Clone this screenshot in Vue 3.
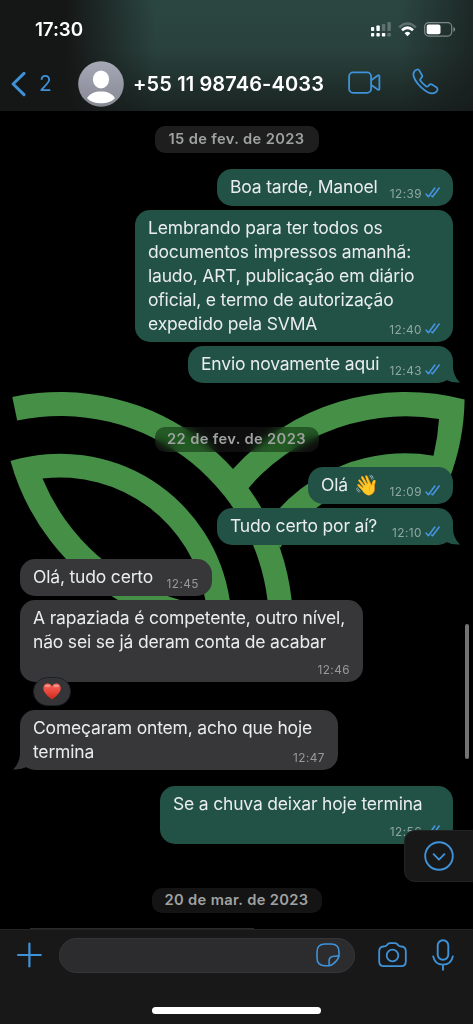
<script setup>
const groups = [
  {
    key: 'feb15',
    date: '15 de fev. de 2023',
    messages: [
      { id: 'm1', out: true, lines: ['Boa tarde, Manoel'], time: '12:39' },
      {
        id: 'm2',
        out: true,
        lines: [
          'Lembrando para ter todos os',
          'documentos impressos amanhã:',
          'laudo, ART, publicação em diário',
          'oficial, e termo de autorização',
          'expedido pela SVMA'
        ],
        time: '12:40'
      },
      { id: 'm3', out: true, tail: true, lines: ['Envio novamente aqui'], time: '12:43' }
    ]
  },
  {
    key: 'feb22',
    date: '22 de fev. de 2023',
    messages: [
      { id: 'm4', out: true, lines: ['Olá'], emoji: '👋', time: '12:09' },
      { id: 'm5', out: true, tail: true, lines: ['Tudo certo por aí?'], time: '12:10' },
      { id: 'm6', lines: ['Olá, tudo certo'], time: '12:45' },
      {
        id: 'm7',
        lines: ['A rapaziada é competente, outro nível,', 'não sei se já deram conta de acabar'],
        time: '12:46',
        reaction: true
      },
      { id: 'm8', tail: true, lines: ['Começaram ontem, acho que hoje', 'termina'], time: '12:47' },
      { id: 'm9', out: true, lines: ['Se a chuva deixar hoje termina'], time: '12:56' }
    ]
  },
  { key: 'mar20', date: '20 de mar. de 2023', messages: [] }
]
</script>

<template>
  <div class="phone">
    <header class="header">
      <div class="status">
        <span class="clock">17:30</span>
        <div class="status-icons">
          <svg class="signal" width="20" height="15" viewBox="0 0 20 15" fill="#fff">
            <rect x="0" y="5" width="3.2" height="4" rx=".8" />
            <rect x="5.4" y="3.4" width="3.4" height="5.6" rx=".8" />
            <rect x="10.9" y="2" width="3.4" height="7" rx=".8" opacity=".25" />
            <rect x="16.4" y="0" width="3.4" height="9" rx=".8" opacity=".25" />
            <rect x="0" y="11" width="3.2" height="3.6" rx=".8" />
            <rect x="5.4" y="11" width="3.4" height="3.6" rx=".8" />
            <rect x="10.9" y="11" width="3.4" height="3.6" rx=".8" />
            <rect x="16.4" y="11" width="3.4" height="3.6" rx=".8" opacity=".25" />
          </svg>
          <svg class="wifi" width="19" height="15" viewBox="0 0 19 15">
            <path d="M1.2 5.4Q9.5-2.4 17.8 5.4" fill="none" stroke="#fff" stroke-width="2.6" opacity=".25" />
            <path d="M4 8.3Q9.5 3.2 15 8.3" fill="none" stroke="#fff" stroke-width="2.7" />
            <path d="M6.6 11.2Q9.5 8.5 12.4 11.2L9.5 14.2Z" fill="#fff" />
          </svg>
          <svg class="battery" width="32" height="15" viewBox="0 0 32 15">
            <rect x=".7" y=".7" width="27" height="13.4" rx="4" fill="none" stroke="#fff" stroke-width="1.2" opacity=".42" />
            <rect x="2.7" y="2.6" width="13.8" height="9.6" rx="2" fill="#fff" />
            <path d="M29.4 5v4.8q1.7-.6 1.7-2.4T29.4 5Z" fill="#fff" opacity=".45" />
          </svg>
        </div>
      </div>
      <div class="contact">
        <svg class="back" width="16" height="26" viewBox="0 0 16 26">
          <path d="M14 2.4 3.1 13 14 23.6" fill="none" stroke="#3f92d8" stroke-width="3" stroke-linecap="round" stroke-linejoin="round" />
        </svg>
        <span class="unread">2</span>
        <svg class="avatar" width="46" height="46" viewBox="0 0 46 46">
          <defs>
            <linearGradient id="avatar-fill" x1="0" y1="0" x2="0" y2="1">
              <stop offset="0" stop-color="#a6a9b6" />
              <stop offset="1" stop-color="#868994" />
            </linearGradient>
          </defs>
          <circle cx="23" cy="23" r="22.8" fill="url(#avatar-fill)" />
          <ellipse cx="23" cy="18.4" rx="8.1" ry="9" fill="#fff" />
          <path d="M9 37.2C12 32.5 17 30.6 23 30.6S34 32.5 37 37.2C33 41 28 42.3 23 42.3S13 41 9 37.2Z" fill="#fff" />
        </svg>
        <span class="number">+55 11 98746-4033</span>
        <svg class="video" width="34" height="24" viewBox="0 0 34 24" fill="none" stroke="#3f92d8" stroke-width="1.8" stroke-linejoin="round">
          <rect x="1.1" y="1.4" width="22" height="20.4" rx="4" />
          <path d="M23.3 9.2 29.7 4.5Q31.4 3.7 31.4 5.3V17.8Q31.4 19.4 29.7 18.6L23.3 13.9" />
        </svg>
        <svg class="call" width="28" height="28" viewBox="0 0 28 28" fill="none" stroke="#3f92d8" stroke-width="1.8" stroke-linejoin="round">
          <path d="M5.2 1.5C3.6 1.9 1.7 3.7 1.4 5.8C1 9.3 5 15.3 9.2 19.3C13.3 23 17.2 25.6 20.5 25.4C23 25.1 25.2 23.4 25.5 21.4C25.6 20.5 25.2 19.9 24.4 19.3L19.9 16.5C19 16 18.2 16.1 17.4 16.9L16.2 18.1C15.5 18.8 14.8 18.8 14 18.2C12 16.8 9.8 14.6 8.5 12.8C7.9 12 8 11.3 8.7 10.6L9.6 9.5C10.4 8.7 10.4 7.9 9.9 7L7.4 2.6C6.8 1.6 6.2 1.2 5.2 1.5Z" />
        </svg>
      </div>
    </header>

    <main class="chat">
      <svg class="wallpaper" width="473" height="489" viewBox="0 111 473 489" fill="#458f47">
        <path d="M12.3 397A233 233 0 0 1 293 625H269A209 209 0 0 0 17.2 420.4Z" />
        <path d="M464.6 399.5A233 233 0 0 0 233 469V508A209 209 0 0 1 439 419A209 209 0 0 1 433.5 455.7A171.5 171.5 0 0 0 268 522L280 548A147.5 147.5 0 0 1 445 483L449 480A233 233 0 0 0 464.6 399.5Z" />
        <path d="M10.5 461A171.5 171.5 0 0 1 229.7 600H205.4A147.5 147.5 0 0 0 42.5 478.5A209 209 0 0 0 180 600H118A233 233 0 0 1 10.5 461Z" />
      </svg>

      <section v-for="g in groups" :key="g.key" class="group" :class="g.key">
        <div class="date"><span>{{ g.date }}</span></div>
        <div
          v-for="m in g.messages"
          :key="m.id"
          class="bubble"
          :class="[m.id, m.out ? 'out' : 'in']"
        >
          <div class="text">
            <div v-for="line in m.lines" :key="line" class="line">
              <span>{{ line }}</span>
              <span v-if="m.emoji" class="emoji">{{ m.emoji }}</span>
            </div>
          </div>
          <div class="meta">
            <span>{{ m.time }}</span>
            <svg v-if="m.out" class="ticks" width="16" height="11" viewBox="0 0 16 11" fill="none" stroke="#4796e6" stroke-width="1.5" stroke-linecap="round" stroke-linejoin="round">
              <path d="M1 7 3.4 9.8 9.8 1M6.5 9 7.6 9.8 14.2 1" />
            </svg>
          </div>
          <svg v-if="m.tail" class="tail" width="20" height="22" viewBox="0 0 20 22">
            <path d="M0 0H12.9V5Q13.2 15.5 20 21.4Q12 22 6.5 19L0 20Z" />
          </svg>
          <div v-if="m.reaction" class="reaction">
            <svg width="18" height="17" viewBox="0 0 18 17">
              <defs>
                <linearGradient id="heart-fill" x1="0" y1="0" x2="0" y2="1">
                  <stop offset="0" stop-color="#f5675a" />
                  <stop offset=".5" stop-color="#e9483d" />
                  <stop offset="1" stop-color="#c8271d" />
                </linearGradient>
              </defs>
              <path d="M9 16.6C5.5 13.7.3 9.7.3 5.2C.3 2.4 2.2.5 4.7.5C6.7.5 8.3 1.6 9 3.4C9.7 1.6 11.3.5 13.3.5C15.8.5 17.7 2.4 17.7 5.2C17.7 9.7 12.5 13.7 9 16.6Z" fill="url(#heart-fill)" />
              <ellipse cx="4.6" cy="3" rx="2.8" ry="1.3" fill="#fff" opacity=".3" />
              <ellipse cx="13.2" cy="3" rx="2.8" ry="1.3" fill="#fff" opacity=".3" />
            </svg>
          </div>
        </div>
      </section>

      <div class="scrollbar"></div>
      <div class="next-bubble"></div>
      <button class="jump" aria-label="Ir para o fim">
        <svg width="30" height="30" viewBox="0 0 30 30" fill="none" stroke="#3f92d8" stroke-width="1.9" stroke-linecap="round" stroke-linejoin="round">
          <circle cx="15" cy="15" r="13.8" />
          <path d="M9.6 13.2 15 18.6 20.4 13.2" />
        </svg>
      </button>
    </main>

    <footer class="footer">
      <div class="composer">
        <svg class="plus" width="26" height="26" viewBox="0 0 26 26" stroke="#3f92d8" stroke-width="2.2" stroke-linecap="round">
          <path d="M13.4 1.6V24.4M2 13H24.8" />
        </svg>
        <div class="field">
          <svg width="24" height="24" viewBox="0 0 24 24" fill="none" stroke="#3f92d8" stroke-width="1.6" stroke-linejoin="round">
            <path d="M12.8 22.7H9Q1 22.7 1 14.7V9Q1 1 9 1H15Q23 1 23 9V12.2C23 16 16.8 22.7 12.8 22.7Z" />
            <path d="M12.8 22.7Q13.4 21.6 13.1 18.4Q12.9 13.4 18.2 13.2Q22.2 13.3 23 12.2" />
          </svg>
        </div>
        <svg class="camera" width="29" height="26" viewBox="0 0 29 26" fill="none" stroke="#3f92d8" stroke-width="1.8" stroke-linejoin="round">
          <path d="M1.2 9.2Q1.2 4.9 5.5 4.5Q7.6 4.5 8.7 3.3Q10.2 1.2 12.1 1.2H16.9Q18.8 1.2 20.3 3.3Q21.4 4.5 23.5 4.5Q27.8 4.9 27.8 9.2V19.6Q27.8 24.2 23.2 24.2H5.8Q1.2 24.2 1.2 19.6Z" />
          <circle cx="14.5" cy="13.5" r="5.8" />
        </svg>
        <svg class="mic" width="22" height="32" viewBox="0 0 22 32" fill="none" stroke="#3f92d8" stroke-width="1.9" stroke-linecap="round">
          <rect x="5.7" y="1.2" width="10.6" height="19.6" rx="5.3" />
          <path d="M1.2 17.4Q2.7 25.6 11 25.6T20.8 17.4M11 25.6V30.8" />
        </svg>
      </div>
      <div class="home-bar"></div>
    </footer>
  </div>
</template>

<style>
html,
body {
  background: #000;
}
</style>

<style scoped>
.phone {
  width: 473px;
  height: 1024px;
  display: flex;
  flex-direction: column;
  overflow: hidden;
  background: #000;
  color: #e9edec;
  font-family: Inter, 'Liberation Sans', sans-serif;
}

.header {
  box-sizing: border-box;
  height: 111px;
  flex: none;
  background:
    linear-gradient(90deg, #151616 0, #151616 64px, rgba(21, 22, 22, 0) 155px, rgba(21, 22, 22, 0) 400px, rgba(21, 24, 24, 0.65) 473px),
    linear-gradient(180deg, #2b4641 0, #29413c 50px, #1a2422 111px);
}
.status {
  height: 57px;
  display: flex;
  align-items: center;
  justify-content: space-between;
  padding: 1px 17px 0 35px;
  box-sizing: border-box;
}
.clock {
  font-size: 18.8px;
  font-weight: 600;
  color: #fff;
  letter-spacing: -0.1px;
}
.status-icons {
  display: flex;
  align-items: center;
  margin-top: 0;
}
.wifi {
  margin-left: 7px;
}
.battery {
  margin-left: 7px;
}
.contact {
  display: flex;
  align-items: center;
  height: 53px;
}
.back {
  margin-left: 10px;
}
.unread {
  margin-left: 13px;
  width: 12px;
  color: #3f92d8;
  font-size: 21px;
}
.avatar {
  margin-left: 27px;
}
.number {
  margin-left: 9px;
  width: 193px;
  color: #fff;
  font-size: 20px;
  font-weight: 600;
  letter-spacing: 0.12px;
  white-space: nowrap;
}
.video {
  margin-left: 22px;
  margin-top: -2px;
}
.call {
  margin-left: 30px;
  margin-top: -3px;
}

.chat {
  position: relative;
  height: 818px;
  flex: none;
  overflow: hidden;
}
.wallpaper {
  position: absolute;
  left: 0;
  top: 0;
}
.group {
  position: relative;
  display: flex;
  flex-direction: column;
  width: 473px;
}
.feb15 {
  padding-top: 15px;
}
.feb22 {
  padding-top: 44px;
}
.mar20 {
  padding-top: 44px;
}
.date {
  box-sizing: border-box;
  display: flex;
  align-items: center;
  justify-content: center;
  align-self: center;
  width: 164px;
  height: 25px;
  padding-bottom: 2px;
  border-radius: 10px;
  background: rgba(28, 28, 28, 0.5);
  backdrop-filter: blur(5px) saturate(1.6);
  color: #a0a2a2;
  font-size: 14.7px;
  font-weight: 600;
  letter-spacing: 0.36px;
  white-space: nowrap;
}
.feb15 .date {
  height: 27px;
  background: #1e1e1e;
  margin-bottom: 16px;
}
.feb22 .date {
  margin-bottom: 15px;
}
.mar20 .date {
  width: 170px;
  background: #141414;
}

.bubble {
  position: relative;
  box-sizing: border-box;
  height: 37px;
  padding: 6px 13px;
  border-radius: 15px;
  margin-bottom: 4px;
}
.out {
  align-self: flex-end;
  margin-right: 20px;
  background: #225146;
  fill: #225146;
}
.in {
  align-self: flex-start;
  margin-left: 20px;
  background: #373739;
  fill: #373739;
}
.line {
  display: flex;
  align-items: center;
  height: 24px;
  font-size: 17.5px;
  line-height: 24px;
  letter-spacing: -0.18px;
  white-space: nowrap;
}
.emoji {
  margin-left: 6px;
  font-size: 20px;
  letter-spacing: 0;
}
.meta {
  position: absolute;
  right: 13px;
  bottom: 5px;
  display: flex;
  align-items: center;
  height: 15px;
  color: #8ea8a2;
  font-size: 11.8px;
  letter-spacing: 0.45px;
}
.in .meta {
  color: #98989b;
}
.ticks {
  margin-left: 3px;
  margin-right: -1px;
  margin-top: -2px;
}
.tail {
  position: absolute;
  right: -7px;
  bottom: 0;
}
.in .tail {
  right: auto;
  left: -7px;
  transform: scaleX(-1);
}

.m1 {
  width: 236px;
}
.m2 {
  width: 318px;
  height: 132px;
}
.m3 {
  width: 265px;
  margin-bottom: 0;
}
.m4 {
  width: 145px;
}
.m5 {
  width: 236px;
  margin-bottom: 14px;
}
.m6 {
  width: 192px;
}
.m7 {
  width: 343px;
  height: 82px;
  margin-bottom: 28px;
}
.m8 {
  width: 318px;
  height: 60px;
  margin-bottom: 16px;
}
.m9 {
  width: 293px;
  height: 58px;
  margin-bottom: 0;
}
.reaction {
  position: absolute;
  left: 13px;
  top: 77px;
  box-sizing: border-box;
  width: 38px;
  height: 29px;
  border: 1px solid #1b2226;
  border-radius: 15px;
  background: #353537;
  display: flex;
  align-items: center;
  justify-content: center;
}
.scrollbar {
  position: absolute;
  right: 4px;
  top: 513px;
  width: 4px;
  height: 135px;
  border-radius: 2px;
  background: #737373;
}
.next-bubble {
  position: absolute;
  left: 30px;
  bottom: 0;
  width: 224px;
  height: 1px;
  background: #2a2a2b;
}
.jump {
  position: absolute;
  right: -2px;
  top: 719px;
  box-sizing: border-box;
  width: 71px;
  height: 52px;
  padding: 0 2px 0 0;
  border: 1px solid #232525;
  border-radius: 11px 0 0 11px;
  background: #181818;
  display: flex;
  align-items: center;
  justify-content: center;
}

.footer {
  height: 95px;
  flex: none;
  box-sizing: border-box;
  border-top: 1px solid #242424;
  background: #181818;
}
.composer {
  display: flex;
  align-items: center;
  height: 50px;
}
.plus {
  margin-left: 16px;
}
.field {
  box-sizing: border-box;
  margin-left: 17px;
  width: 296px;
  height: 35px;
  border: 1px solid #363638;
  border-radius: 18px;
  background: #2c2c2e;
  padding-right: 14px;
  display: flex;
  align-items: center;
  justify-content: flex-end;
}
.camera {
  margin-left: 23px;
}
.mic {
  margin-left: 25px;
}
.home-bar {
  width: 169px;
  height: 7px;
  margin: 27px auto 0;
  border-radius: 4px;
  background: #fff;
}
</style>
